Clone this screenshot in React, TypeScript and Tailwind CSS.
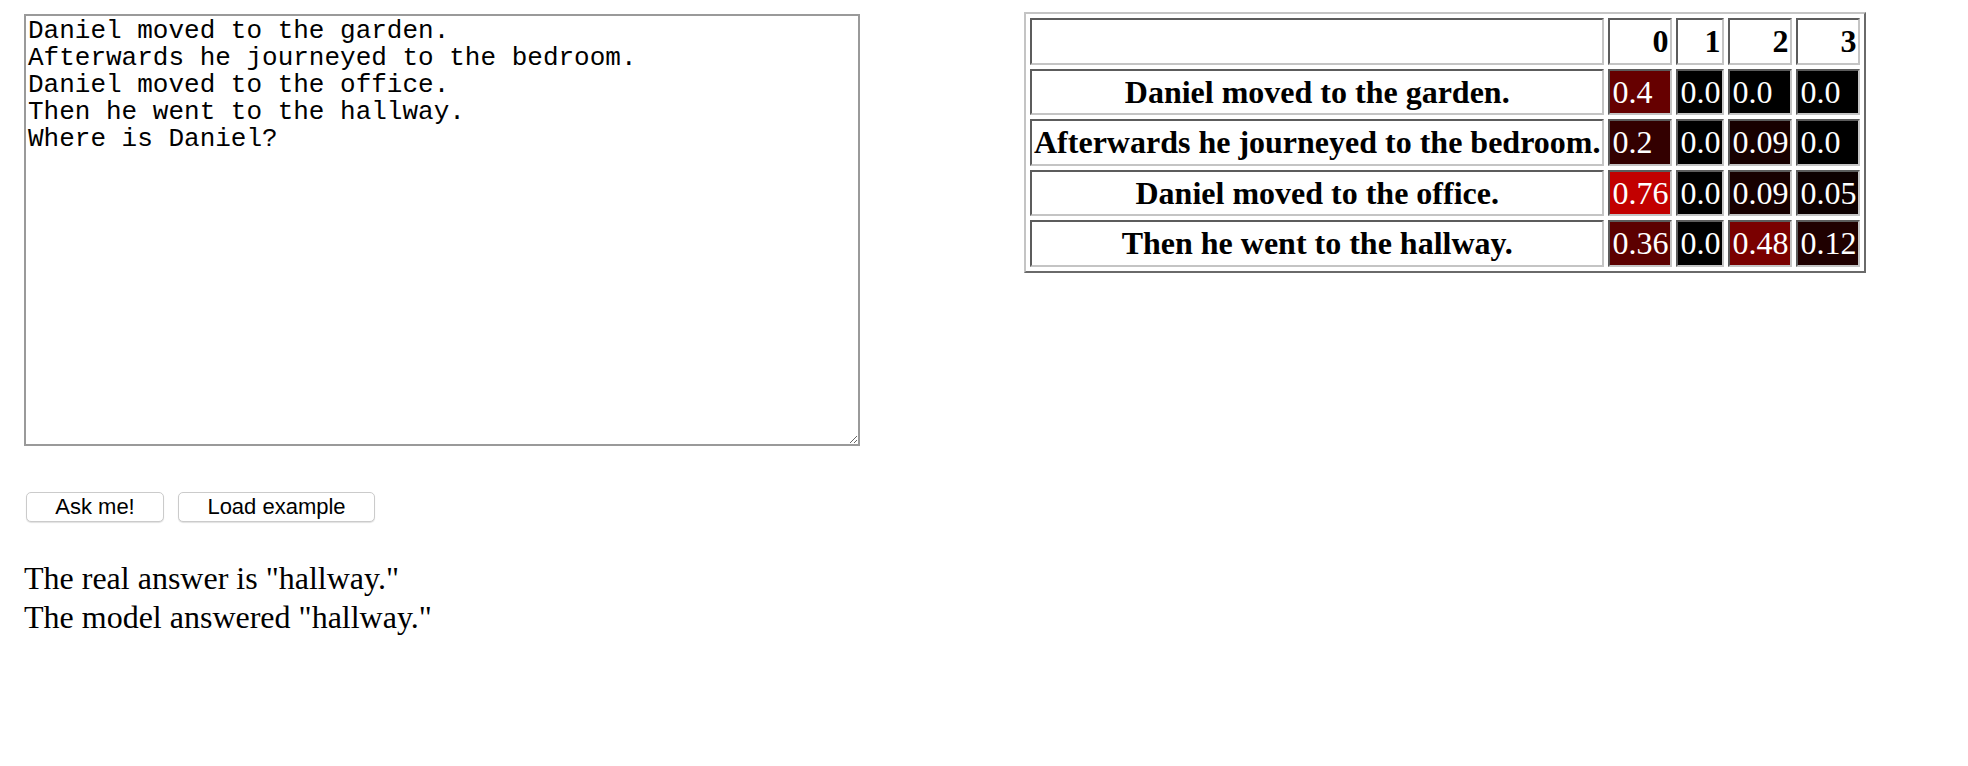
const story = `Daniel moved to the garden.
Afterwards he journeyed to the bedroom.
Daniel moved to the office.
Then he went to the hallway.
Where is Daniel?`;

type Row = {
	sentence: string;
	weights: string[];
};

const rows: Row[] = [
	{ sentence: 'Daniel moved to the garden.', weights: ['0.4', '0.0', '0.0', '0.0'] },
	{ sentence: 'Afterwards he journeyed to the bedroom.', weights: ['0.2', '0.0', '0.09', '0.0'] },
	{ sentence: 'Daniel moved to the office.', weights: ['0.76', '0.0', '0.09', '0.05'] },
	{ sentence: 'Then he went to the hallway.', weights: ['0.36', '0.0', '0.48', '0.12'] },
];

// attention weight -> shade of red, as the original page paints it
const heat = (w: string) => `rgb(${Math.round(parseFloat(w) * 255)}, 0, 0)`;

const cell =
	'border-2 border-t-[#5c5c5c] border-l-[#5c5c5c] border-b-[#c4c4c4] border-r-[#c4c4c4] p-[2px] leading-[38.5px]';

const App = () => {
	return (
		<div className="flex gap-[164px] pt-[12px] pl-[24px] font-['Liberation_Serif',serif] text-black bg-white min-h-[766px]">
			<div className="flex flex-col pt-[2px]">
				<textarea
					defaultValue={story}
					spellCheck={false}
					className="w-[836px] h-[432px] border-2 border-[#9a9a9a] p-[2px] font-['Liberation_Mono',monospace] text-[26px] leading-[27px] text-black outline-none"
				/>
				<div className="flex gap-[14px] mt-[46px] ml-[2px]">
					<button className="w-[138px] h-[30px] rounded-[5px] border border-[#cbcbcb] bg-white shadow-[0_1px_1px_rgba(0,0,0,0.12)] font-['Liberation_Sans',Arial,sans-serif] text-[22px] leading-[26px]">
						Ask me!
					</button>
					<button className="w-[197px] h-[30px] rounded-[5px] border border-[#cbcbcb] bg-white shadow-[0_1px_1px_rgba(0,0,0,0.12)] font-['Liberation_Sans',Arial,sans-serif] text-[22px] leading-[26px]">
						Load example
					</button>
				</div>
				<div className="mt-[37px] text-[32px] leading-[39px]">
					<div>The real answer is "hallway."</div>
					<div>The model answered "hallway."</div>
				</div>
			</div>
			<div>
				<table className="border-separate border-spacing-1 border-2 border-t-[#c4c4c4] border-l-[#c4c4c4] border-b-[#6a6a6a] border-r-[#6a6a6a] text-[32px]">
					<tbody>
						<tr>
							<th className={cell}></th>
							{['0', '1', '2', '3'].map((h) => (
								<th key={h} className={`${cell} text-right font-bold`}>
									{h}
								</th>
							))}
						</tr>
						{rows.map((row) => (
							<tr key={row.sentence}>
								<th className={`${cell} text-center font-bold whitespace-nowrap`}>{row.sentence}</th>
								{row.weights.map((w, i) => (
									<td
										key={i}
										className={`${cell} text-left text-white`}
										style={{ backgroundColor: heat(w) }}>
										{w}
									</td>
								))}
							</tr>
						))}
					</tbody>
				</table>
			</div>
		</div>
	);
};

export default App;
